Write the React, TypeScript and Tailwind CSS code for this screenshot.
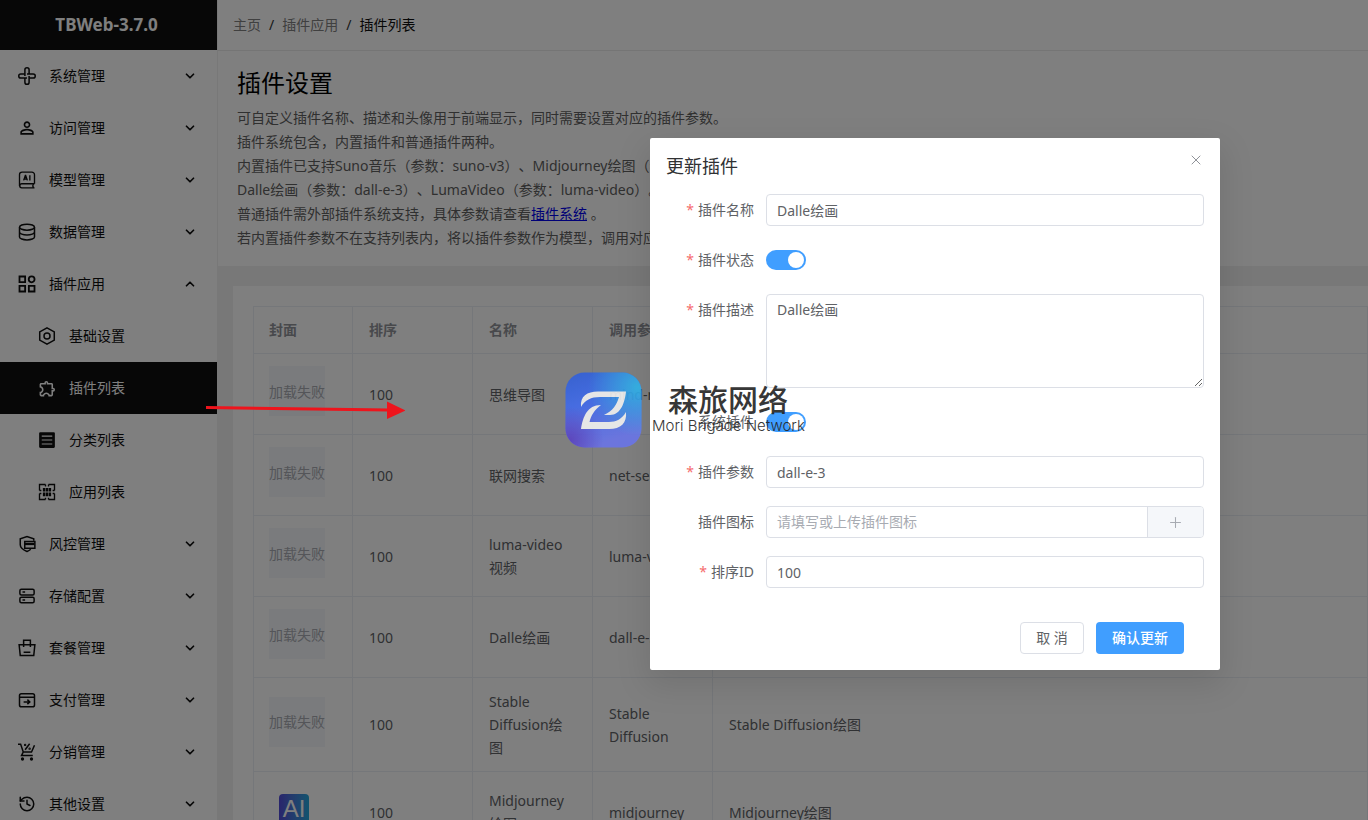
import { useState } from 'react';
import type { ReactNode } from 'react';
import { ChevronDown, ChevronUp, History, Plus, X } from 'lucide-react';
import { MdOutlineExtension, MdPersonOutline } from 'react-icons/md';

interface MenuItem {
  label: string;
  icon: ReactNode;
  open?: boolean;
  children?: { label: string; icon: ReactNode; active?: boolean }[];
}

interface Plugin {
  id: number;
  order: number;
  name: string;
  param: string;
  desc?: string;
  cover?: boolean;
}

const Icon = ({ children, width = 2 }: { children: ReactNode; width?: number }) => (
  <svg viewBox="0 0 24 24" className="size-[18px] overflow-visible" fill="none" stroke="currentColor" strokeWidth={width} aria-hidden="true">
    {children}
  </svg>
);

const PINWHEEL = 'M9.200 12V3.800a2.800 2.800 0 0 1 5.600 0v5.400';

const menu: MenuItem[] = [
  {
    label: '系统管理',
    icon: (
      <Icon>
        {[0, 90, 180, 270].map((deg) => (
          <path key={deg} d={PINWHEEL} transform={`rotate(${deg} 12 12)`} />
        ))}
      </Icon>
    ),
  },
  { label: '访问管理', icon: <MdPersonOutline size={20} /> },
  {
    label: '模型管理',
    icon: (
      <Icon width={1.8}>
        <path d="M22 17V5a3.500 3.500 0 0 0-3.500-3.500h-13A3.500 3.500 0 0 0 2 5v15" />
        <path d="M22 17H5a2.700 2.700 0 0 0 0 5.400h17M20.500 17.500q-1.500 2.300 0 4.500" />
        <path d="m7.500 12.500 2.300-6.500h.4l2.300 6.500M8.300 10.700h3.500M15.800 5.700v7" />
      </Icon>
    ),
  },
  {
    label: '数据管理',
    icon: (
      <Icon>
        <ellipse cx="12" cy="5.500" rx="10" ry="4" />
        <path d="M2 5.500v13c0 2.200 4.500 4 10 4s10-1.800 10-4v-13M2 12c0 2.200 4.500 4 10 4s10-1.800 10-4" />
      </Icon>
    ),
  },
  {
    label: '插件应用',
    icon: (
      <Icon width={2.4}>
        <path d="M2 2h7.500v7.500H2zM2 14.500h7.500V22H2zM14.500 14.500H22V22h-7.500z" />
        <circle cx="18.200" cy="5.800" r="3.900" />
      </Icon>
    ),
    open: true,
    children: [
      {
        label: '基础设置',
        icon: (
          <Icon>
            <path d="m12 1.200 9.700 5.400v10.800L12 22.800l-9.700-5.400V6.600z" />
            <circle cx="12" cy="12" r="4" />
          </Icon>
        ),
      },
      { label: '插件列表', icon: <MdOutlineExtension size={19} />, active: true },
      {
        label: '分类列表',
        icon: (
          <Icon>
            <path
              fill="currentColor"
              stroke="none"
              fillRule="evenodd"
              d="M3 1.500h18a1.500 1.500 0 0 1 1.500 1.500v18a1.500 1.500 0 0 1-1.500 1.500H3A1.500 1.500 0 0 1 1.500 21V3A1.500 1.500 0 0 1 3 1.500zM5 6v1.500h14V6zM5 11.200v1.500h14v-1.500zM5 16.500V18h14v-1.500z"
            />
          </Icon>
        ),
      },
      {
        label: '应用列表',
        icon: (
          <Icon width={1.8}>
            <path d="M10 2H2v8M14 2h8v8M2 14v8h8M22 14v8h-8M10 4.500V2M14 4.500V2M10 22v-2.500M14 22v-2.500M4.500 10H2M4.500 14H2M22 10h-2.500M22 14h-2.500" />
            <path
              fill="currentColor"
              stroke="none"
              d="M6.500 6.500h3.300v4.800H6.500zM14.200 6.500h3.300v4.800h-3.300zM10.500 6.500h3v4.800h-3zM6.500 12.500h3.300v5H6.500zM10.500 12.500h3v5h-3zM14.200 12.500h3.300v5h-3.300z"
            />
          </Icon>
        ),
      },
    ],
  },
  {
    label: '风控管理',
    icon: (
      <Icon>
        <path d="M21 7.500V5.200L12 2 3 5.200V13c0 4.200 5 7.300 9 9 1.700-.7 3.500-1.700 5-3" />
        <path d="M9 8.500h13.500v9H9z" />
        <path d="M9 12h13" strokeWidth="3" />
      </Icon>
    ),
  },
  {
    label: '存储配置',
    icon: (
      <Icon>
        <rect x="2.500" y="3" width="19" height="7.500" rx="2" />
        <rect x="2.500" y="13.500" width="19" height="7.500" rx="2" />
        <path d="M6 6.700h3.500M6 17.200h3.500" />
      </Icon>
    ),
  },
  {
    label: '套餐管理',
    icon: (
      <Icon>
        <path d="M1.500 7.500h21L21 22H3zM7.500 10.500V1.800h9v8.700M7.500 17.500h9" />
      </Icon>
    ),
  },
  {
    label: '支付管理',
    icon: (
      <Icon>
        <rect x="2" y="3.500" width="20" height="17.500" rx="2.500" />
        <path d="M2 8.300h20M7.500 14.500h8M12.500 11.500l3.200 3-3.200 3" />
      </Icon>
    ),
  },
  {
    label: '分销管理',
    icon: (
      <Icon>
        <path d="M0 1.500h3.500l3.500 10.500h11L22 3M7 12l-2.300 4.800h15M9.500 9l6-8" />
        <g fill="currentColor">
          <circle cx="6" cy="21.300" r="1.200" />
          <circle cx="18" cy="21.300" r="1.200" />
          <circle cx="9.500" cy="2.500" r=".6" />
          <circle cx="15.500" cy="7.500" r=".6" />
        </g>
      </Icon>
    ),
  },
  { label: '其他设置', icon: <History size={18} /> },
];

const plugins: Plugin[] = [
  { id: 1, order: 100, name: '思维导图', param: 'mind-map' },
  { id: 2, order: 100, name: '联网搜索', param: 'net-search' },
  { id: 3, order: 100, name: 'luma-video视频', param: 'luma-video' },
  { id: 4, order: 100, name: 'Dalle绘画', param: 'dall-e-3' },
  { id: 5, order: 100, name: 'Stable Diffusion绘图', param: 'Stable Diffusion', desc: 'Stable Diffusion绘图' },
  { id: 6, order: 100, name: 'Midjourney绘图', param: 'midjourney', desc: 'Midjourney绘图', cover: true },
];

const Sidebar = () => (
  <aside className="w-[217px] shrink-0 bg-white">
    <div className="flex h-[50px] items-center justify-center bg-[#0e0e0e] pr-1 text-[17px] font-bold text-white">
      TBWeb-3.7.0
    </div>
    <nav className="text-[#0f0f0f]">
      {menu.map((item) => (
        <div key={item.label}>
          <button type="button" className="flex h-[52px] w-full items-center pr-5 pl-[17px]">
            <span className="flex w-5 justify-center">{item.icon}</span>
            <span className="ml-3 flex-1 text-left">{item.label}</span>
            {item.open ? <ChevronUp size={14} strokeWidth={3} /> : <ChevronDown size={14} strokeWidth={3} />}
          </button>
          {item.children?.map((child) => (
            <a
              key={child.label}
              href="#"
              className={`flex h-[52px] items-center pl-[37px] ${child.active ? 'bg-[#0e0e0e] text-white' : ''}`}
            >
              <span className="flex w-5 justify-center">{child.icon}</span>
              <span className="ml-3">{child.label}</span>
            </a>
          ))}
        </div>
      ))}
    </nav>
  </aside>
);

const Cover = ({ cover }: { cover?: boolean }) => (
  <div className="pb-[6px]">
    {cover ? (
      <div className="flex size-[50px] items-center justify-center">
        <span className="flex size-[30px] items-center justify-center rounded-sm bg-linear-to-r from-[#5148d8] to-[#20a8dc] font-['Liberation_Sans',sans-serif] text-2xl text-white">
          AI
        </span>
      </div>
    ) : (
      <div className="flex h-[50px] w-14 items-center justify-center bg-[#f5f7fa] whitespace-nowrap text-[#a8abb2]">加载失败</div>
    )}
  </div>
);

const PluginTable = () => (
  <table className="w-full table-fixed border-separate border-spacing-0 border-t border-l border-[#ebeef5] text-left leading-[23px] text-[#606266]">
    <colgroup>
      <col className="w-[99px]" />
      <col className="w-[120px]" />
      <col className="w-[120px]" />
      <col className="w-[120px]" />
      <col />
    </colgroup>
    <thead>
      <tr className="text-[#909399]">
        {['封面', '排序', '名称', '调用参数', '描述'].map((title) => (
          <th key={title} className="border-r border-b border-[#ebeef5] px-4 py-[11px] leading-6 font-bold first:pl-[15px]">
            {title}
          </th>
        ))}
      </tr>
    </thead>
    <tbody>
      {plugins.map((plugin) => (
        <tr key={plugin.id}>
          <td className="border-r border-b border-[#ebeef5] py-3 pl-[15px]">
            <Cover cover={plugin.cover} />
          </td>
          <td className="border-r border-b border-[#ebeef5] px-4 py-3">{plugin.order}</td>
          <td className="border-r border-b border-[#ebeef5] px-4 py-3">{plugin.name}</td>
          <td className="border-r border-b border-[#ebeef5] px-4 py-3">{plugin.param}</td>
          <td className="border-r border-b border-[#ebeef5] px-4 py-3">{plugin.desc}</td>
        </tr>
      ))}
    </tbody>
  </table>
);

interface FieldProps {
  id: string;
  label: string;
  required?: boolean;
  children: ReactNode;
}

const Field = ({ id, label, required, children }: FieldProps) => (
  <div className="flex items-start">
    <label htmlFor={id} className="w-[100px] shrink-0 pr-3 text-right leading-8">
      {required && <span className="mr-1 text-[#f56c6c]">*</span>}
      {label}
    </label>
    <div className="flex min-h-8 flex-1 items-center">{children}</div>
  </div>
);

const inputClass = 'h-8 w-full rounded border border-[#dcdfe6] bg-white px-[10px] outline-none placeholder:text-[#a8abb2]';

const Switch = ({ id }: { id: string }) => {
  const [on, setOn] = useState(true);
  return (
    <input
      id={id}
      type="checkbox"
      role="switch"
      checked={on}
      onChange={() => setOn(!on)}
      className="flex h-5 w-10 cursor-pointer appearance-none items-center rounded-full bg-[#dcdfe6] px-0.5 before:size-4 before:rounded-full before:bg-white before:content-[''] checked:justify-end checked:bg-[#409eff]"
    />
  );
};

const UpdateDialog = () => (
  <div className="absolute inset-0 flex items-start justify-end overflow-hidden bg-black/50 pt-[138px] pr-[148px]">
    <div role="dialog" aria-label="更新插件" className="w-[570px] rounded-xs bg-white p-4 text-[#606266] shadow-[0_12px_32px_4px_rgba(0,0,0,0.1)]">
      <div className="flex items-start justify-between pb-4">
        <h2 className="text-lg leading-6 text-[#303133]">更新插件</h2>
        <button type="button" aria-label="关闭" className="-mt-0.5 text-[#909399]">
          <X size={16} strokeWidth={1.5} />
        </button>
      </div>
      <form className="flex flex-col gap-[18px]" onSubmit={(e) => e.preventDefault()}>
        <Field id="name" label="插件名称" required>
          <input id="name" defaultValue="Dalle绘画" className={inputClass} />
        </Field>
        <Field id="status" label="插件状态" required>
          <Switch id="status" />
        </Field>
        <Field id="desc" label="插件描述" required>
          <textarea
            id="desc"
            defaultValue="Dalle绘画"
            className="h-[94px] w-full rounded border border-[#dcdfe6] bg-white px-[10px] py-1 leading-[22px] outline-none"
          />
        </Field>
        <Field id="system" label="系统插件">
          <Switch id="system" />
        </Field>
        <Field id="param" label="插件参数" required>
          <input id="param" defaultValue="dall-e-3" className={inputClass} />
        </Field>
        <Field id="icon" label="插件图标">
          <div className="flex h-8 w-full overflow-hidden rounded border border-[#dcdfe6]">
            <input id="icon" placeholder="请填写或上传插件图标" className="min-w-0 flex-1 px-[10px] outline-none placeholder:text-[#a8abb2]" />
            <button
              type="button"
              aria-label="上传"
              className="flex w-14 items-center justify-center border-l border-[#dcdfe6] bg-[#f5f7fa] text-[#a8abb2]"
            >
              <Plus size={17} strokeWidth={1.5} />
            </button>
          </div>
        </Field>
        <Field id="sort" label="排序ID" required>
          <input id="sort" defaultValue="100" className={inputClass} />
        </Field>
        <div className="flex justify-end gap-3 pt-4 pr-5">
          <button type="button" className="h-8 w-16 rounded border border-[#dcdfe6] bg-white">
            取 消
          </button>
          <button type="submit" className="h-8 rounded bg-[#409eff] px-4 font-medium text-white">
            确认更新
          </button>
        </div>
      </form>
    </div>
  </div>
);

// Site mark and pointer floating over the page
const Watermark = () => (
  <div className="pointer-events-none absolute top-[372px] left-[565px] flex text-[#222] opacity-90">
    <svg viewBox="0 0 77 76" className="h-[76px] w-[77px]" aria-hidden="true">
      <defs>
        <linearGradient id="mark" x1="0" y1="0" x2="0.3" y2="1">
          <stop offset="0" stopColor="#2f5fd8" />
          <stop offset="0.45" stopColor="#416bec" />
          <stop offset="1" stopColor="#6a75e8" />
        </linearGradient>
        <radialGradient id="markCyan" cx="0.95" cy="0.2" r="0.65">
          <stop offset="0" stopColor="#2db3e8" />
          <stop offset="1" stopColor="#2db3e8" stopOpacity="0" />
        </radialGradient>
        <radialGradient id="markPurple" cx="0.05" cy="0.9" r="0.45">
          <stop offset="0" stopColor="#5a41c4" />
          <stop offset="1" stopColor="#5a41c4" stopOpacity="0" />
        </radialGradient>
      </defs>
      <rect x="0.500" y="0.500" width="76" height="75" rx="19" fill="url(#mark)" />
      <rect x="0.500" y="0.500" width="76" height="75" rx="19" fill="url(#markCyan)" />
      <rect x="0.500" y="0.500" width="76" height="75" rx="19" fill="url(#markPurple)" />
      <path
        fill="#f2f2f2"
        d="M16 35C15 24 22 19.500 33 19.500H61C60 30 56 43 45 43H39C48 39 52 32 54 25H35C26 25 20 28 16 35ZM61 40C62 51 56 57 44 57H16C18 45 22 33 36 33C29 38 26 44 24.500 50H44C51 50 57 47 61 40Z"
      />
    </svg>
    <div className="ml-[10px] pt-[10px] whitespace-nowrap">
      <div className="pl-4 text-3xl leading-9 font-medium">森旅网络</div>
      <div className="font-['Inter','Liberation_Sans',sans-serif] text-[15px] leading-4 font-light">Mori Brigade Network</div>
    </div>
  </div>
);

const Arrow = () => (
  <svg viewBox="0 0 200 20" className="pointer-events-none absolute top-[400px] left-[205px] h-5 w-[200px]" aria-hidden="true">
    <path d="M1 7.500 184 10" stroke="#ee141c" strokeWidth="3" />
    <path d="M182 1.500v17.500L200.500 10.500z" fill="#ee141c" />
  </svg>
);

const App = () => {
  return (
    <div className="relative flex h-screen overflow-hidden bg-[#f0f0f0] font-['Noto_Sans','Noto_Sans_CJK_SC',sans-serif] text-sm [text-spacing-trim:space-all]">
      <Sidebar />
      <main className="min-w-0 flex-1 border-l border-[#f0f0f0]">
        <header className="flex h-[51px] items-center gap-2 border-b border-[#ebebeb] bg-white px-[15px] text-[#808080]">
          <a href="#">主页</a>
          <span className="text-[#303133]">/</span>
          <a href="#">插件应用</a>
          <span className="text-[#303133]">/</span>
          <span className="text-[#0f0f0f]">插件列表</span>
        </header>
        <section className="bg-white px-[19px] py-4 leading-6 text-[#606060]">
          <h1 className="mb-[7px] text-2xl leading-8 text-black">插件设置</h1>
          <p>可自定义插件名称、描述和头像用于前端显示，同时需要设置对应的插件参数。</p>
          <p>插件系统包含，内置插件和普通插件两种。</p>
          <p>内置插件已支持Suno音乐（参数：suno-v3）、Midjourney绘图（参数：midjourney）、</p>
          <p>Dalle绘画（参数：dall-e-3）、LumaVideo（参数：luma-video）。</p>
          <p>
            普通插件需外部插件系统支持，具体参数请查看
            <a href="#" className="text-[#0000ee] underline">插件系统</a> 。
          </p>
          <p>若内置插件参数不在支持列表内，将以插件参数作为模型，调用对应的接口。</p>
        </section>
        <section className="mt-5 ml-[15px] bg-white pt-5 pl-5">
          <PluginTable />
        </section>
      </main>
      <UpdateDialog />
      <Watermark />
      <Arrow />
    </div>
  );
};

export default App;
